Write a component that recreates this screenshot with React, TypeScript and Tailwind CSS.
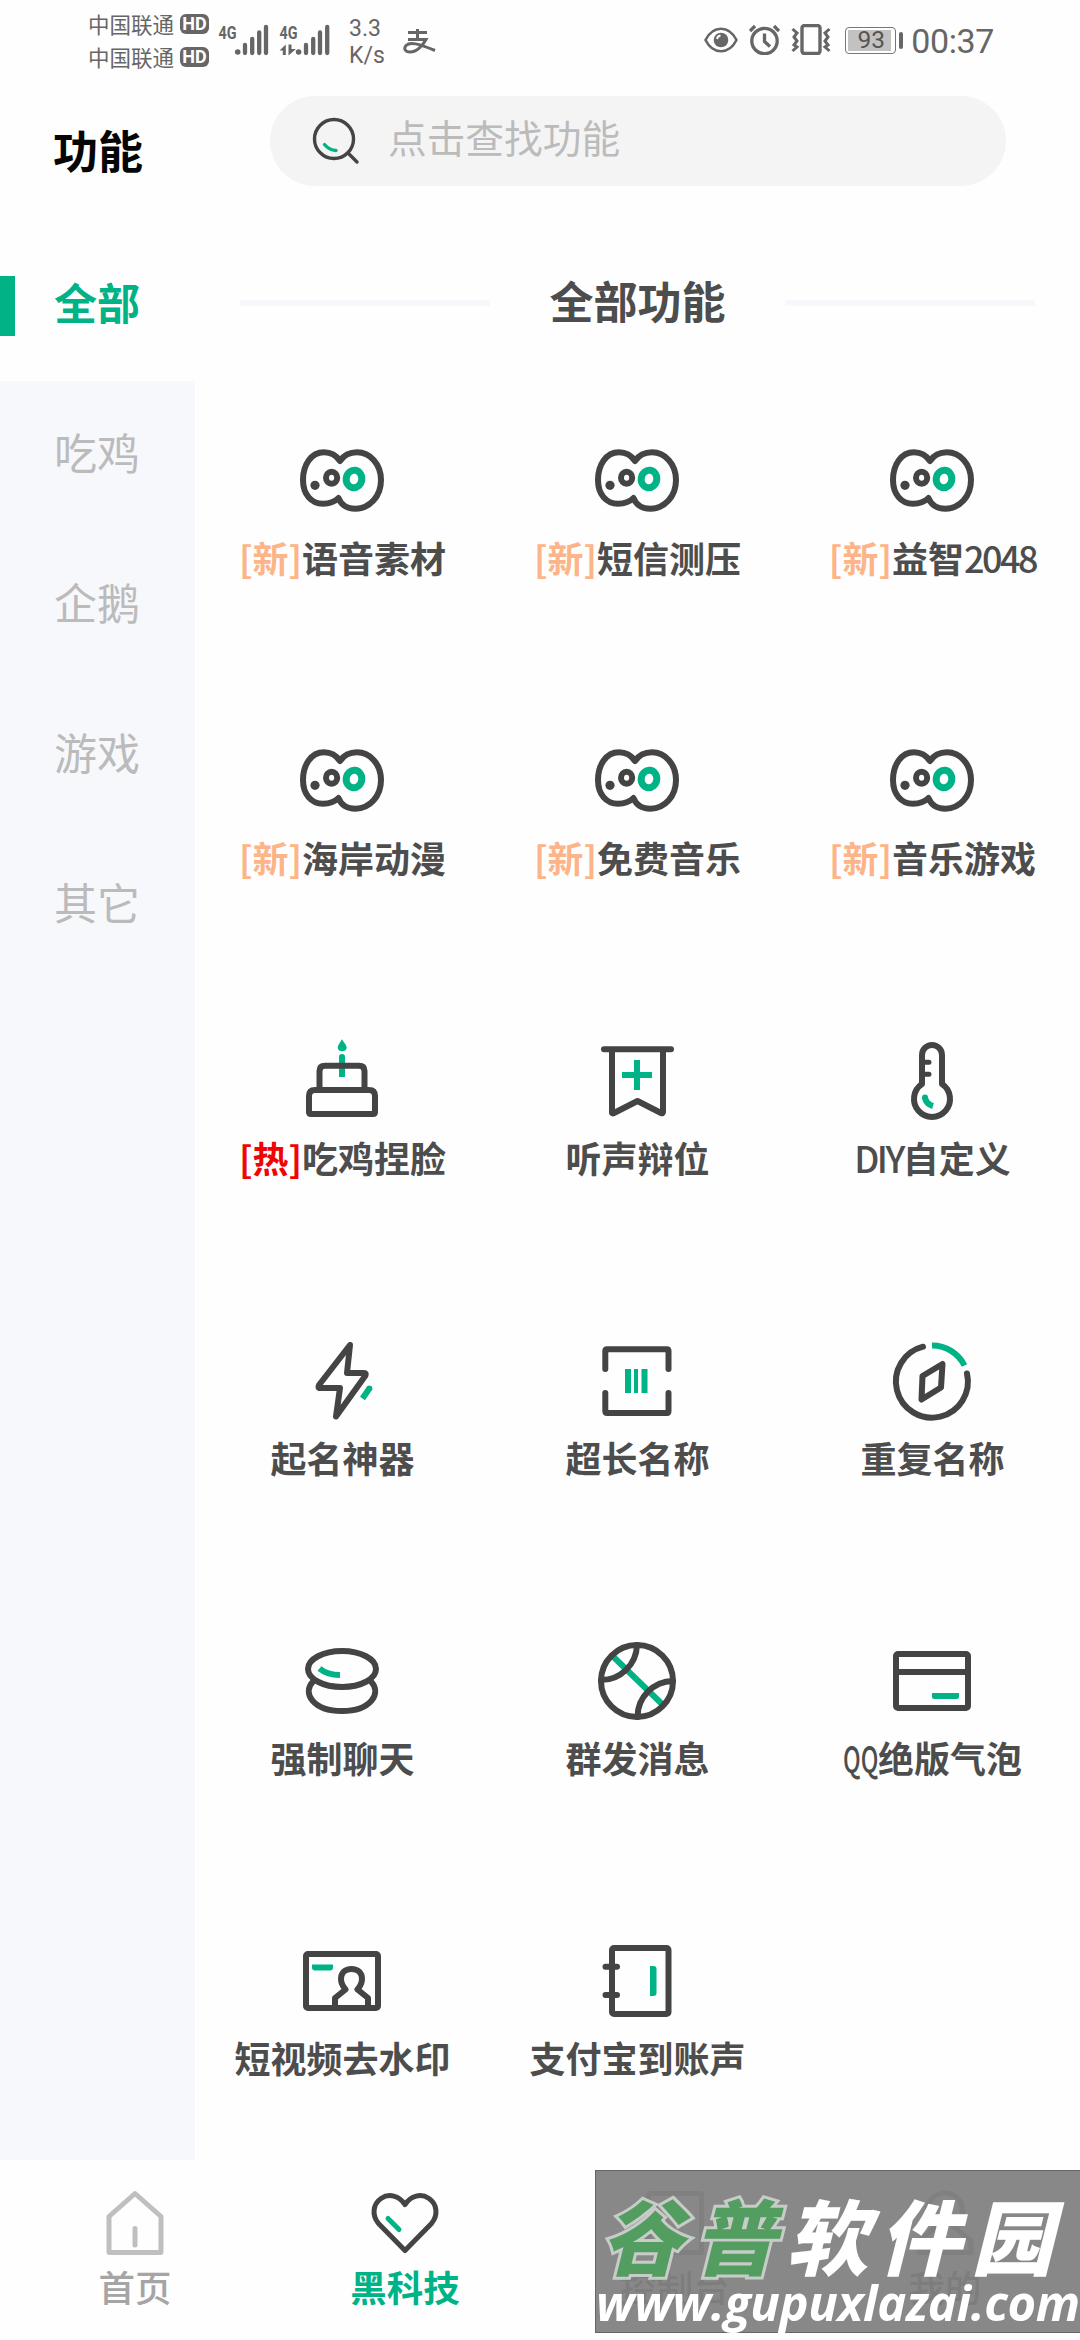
import React from 'react';

const DARK = '#444444';
const GREEN = '#00b386';

interface Tool {
  icon: React.ReactNode;
  label: string;
  latin?: string;
  latinFirst?: boolean;
  tag?: '新' | '热';
}

function IconBox({ children }: { children: React.ReactNode }) {
  return (
    <svg
      className="h-[90px] w-[91px]"
      viewBox="0 0 91 90"
      fill="none"
      stroke={DARK}
      strokeWidth="6"
      strokeLinecap="round"
      strokeLinejoin="round"
    >
      {children}
    </svg>
  );
}

const EyesIcon = () => (
  <IconBox>
    <path d="M43 25C39 19 33 16.3 27 16.3C14 16.3 6 29 6 44C6 58 14 67.7 26 67.7C32 67.7 38 65.5 41.5 62C44 68.5 50 72.7 58.5 72.7C73 72.7 84 60 84 44C84 28 73 16.3 60 16.3C53 16.3 47 19 43 25Z" />
    <circle cx="18" cy="49.3" r="4.6" fill={DARK} stroke="none" />
    <ellipse cx="34.6" cy="41.8" rx="5.6" ry="6" />
    <ellipse cx="57" cy="43" rx="7.8" ry="8.8" stroke={GREEN} strokeWidth="7" transform="rotate(8 57 43)" />
  </IconBox>
);

const CakeIcon = () => (
  <IconBox>
    <path d="M45 3.3C47 7 49.7 9 49.7 12A4.6 4.2 0 0 1 40.7 12C40.7 9 43 7 45 3.3Z" fill={GREEN} stroke="none" />
    <path d="M42 41V20.5Q42 18 45 18T48 20.5V41Z" fill={GREEN} stroke="none" />
    <path d="M22.5 54V35Q22.5 29.7 28 29.7H62Q67.5 29.7 67.5 35V54" />
    <path d="M12 76V60Q12 54 18 54H72Q78 54 78 60V76Q78 78 76 78H14Q12 78 12 76Z" />
  </IconBox>
);

const BannerIcon = () => (
  <IconBox>
    <path d="M12 13.3H79M20 13.3V77Q20.5 78 22 77L45.5 65L69 77Q71 78 71 76V13.3" />
    <path d="M30 39H60M45 24V54" stroke={GREEN} strokeLinecap="butt" />
  </IconBox>
);

const ThermometerIcon = () => (
  <IconBox>
    <path d="M35 48V19A10 10 0 0 1 55 19V48A18 18 0 1 1 35 48Z" />
    <path d="M36 26.3H42M36 38.3H42" strokeWidth="5" />
    <path d="M38 61.5Q39 68 46 70" stroke={GREEN} strokeLinecap="butt" />
    <circle cx="38" cy="61.5" r="3" fill={GREEN} stroke="none" />
  </IconBox>
);

const BoltIcon = () => (
  <IconBox>
    <path d="M53 9L22 49Q20.5 52 23 52H43L39 80.5L68.5 39.5Q69.5 37 67 37H50Z" />
    <path d="M73 51.5L65.5 62.5" stroke={GREEN} strokeLinecap="butt" />
    <circle cx="72.5" cy="52.3" r="2.8" fill={GREEN} stroke="none" />
  </IconBox>
);

const ScanIcon = () => (
  <IconBox>
    <path d="M13.3 33V15Q13.3 13.3 15 13.3H75Q76.5 13.3 76.5 15V33M13.3 57V75Q13.3 77 15 77H75Q76.5 77 76.5 75V57" />
    <path d="M33 33H39V57H33ZM42 33H46V57H42ZM49.5 33H55.5V57H49.5Z" fill={GREEN} stroke="none" />
  </IconBox>
);

const CompassIcon = () => (
  <IconBox>
    <path d="M80 37.5A36 36 0 1 1 36 10.7" />
    <path d="M45 9.5A36 36 0 0 1 77.5 29.5" stroke={GREEN} strokeLinecap="butt" />
    <path d="M55.5 28L54 51.5L34.5 63.5L35.5 40Z" />
  </IconBox>
);

const StonesIcon = () => (
  <IconBox>
    <ellipse cx="45" cy="33" rx="34" ry="18" />
    <path d="M16 45.5C5 57 16 75 45 75C74 75 85 57 74 45.5" />
    <path d="M22.5 32.5Q30 39 43 39" stroke={GREEN} strokeLinecap="butt" />
  </IconBox>
);

const BallIcon = () => (
  <IconBox>
    <path d="M20 19.5L71 69" stroke={GREEN} strokeLinecap="butt" />
    <path d="M45 9A36 36 0 0 1 9 44M81 45A36 36 0 0 0 45.5 81" />
    <circle cx="45" cy="45" r="36" />
  </IconBox>
);

const CardIcon = () => (
  <IconBox>
    <rect x="9" y="18" width="72" height="54" rx="2" />
    <path d="M9 36H81" />
    <path d="M45 57H72V60.5Q72 63 69.5 63H47.5Q45 63 45 60.5Z" fill={GREEN} stroke="none" />
  </IconBox>
);

const PortraitIcon = () => (
  <IconBox>
    <rect x="9" y="18" width="72" height="54" rx="2" />
    <path d="M38 72V62L48.5 53.5C45.5 50 44 46.5 44 43C44 37 48 33 54.5 33C61 33 65 37 65 43C65 46.5 63.5 50 60.5 53.5L71 62V72" />
    <path d="M15 28.5H36V31.5Q36 34.5 33 34.5H18Q15 34.5 15 31.5Z" fill={GREEN} stroke="none" />
  </IconBox>
);

const NotebookIcon = () => (
  <IconBox>
    <rect x="20" y="12" width="56.5" height="66" rx="2" />
    <path d="M13.5 30.7H25M13.5 59H25" />
    <path d="M58 30H61.5Q64.5 30 64.5 33V57Q64.5 60 61.5 60H58Z" fill={GREEN} stroke="none" />
  </IconBox>
);

const tools: Tool[] = [
  { icon: <EyesIcon />, label: '语音素材', tag: '新' },
  { icon: <EyesIcon />, label: '短信测压', tag: '新' },
  { icon: <EyesIcon />, label: '益智', latin: '2048', tag: '新' },
  { icon: <EyesIcon />, label: '海岸动漫', tag: '新' },
  { icon: <EyesIcon />, label: '免费音乐', tag: '新' },
  { icon: <EyesIcon />, label: '音乐游戏', tag: '新' },
  { icon: <CakeIcon />, label: '吃鸡捏脸', tag: '热' },
  { icon: <BannerIcon />, label: '听声辩位' },
  { icon: <ThermometerIcon />, label: '自定义', latin: 'DIY', latinFirst: true },
  { icon: <BoltIcon />, label: '起名神器' },
  { icon: <ScanIcon />, label: '超长名称' },
  { icon: <CompassIcon />, label: '重复名称' },
  { icon: <StonesIcon />, label: '强制聊天' },
  { icon: <BallIcon />, label: '群发消息' },
  { icon: <CardIcon />, label: '绝版气泡', latin: 'QQ', latinFirst: true },
  { icon: <PortraitIcon />, label: '短视频去水印' },
  { icon: <NotebookIcon />, label: '支付宝到账声' },
];

const categories = ['全部', '吃鸡', '企鹅', '游戏', '其它'];

function Carrier() {
  return (
    <div className="flex h-[33px] items-center gap-[6px]">
      <span className="text-[21.5px] leading-none">中国联通</span>
      <span className="flex h-5 w-[29px] items-center justify-center rounded-[6px] bg-[#666666] font-['Roboto'] text-[18px] leading-none font-bold text-white">
        HD
      </span>
    </div>
  );
}

function Signals() {
  return (
    <svg className="ml-2 h-[40px] w-[114px]" viewBox="218 20 114 40" fill="none" stroke="#666666" strokeWidth="4.3" strokeLinecap="round">
      <g fill="#666666" stroke="none" fontFamily="Roboto, sans-serif" fontSize="19" fontWeight="700">
        <text x="219.5" y="38.5" textLength="18" lengthAdjust="spacingAndGlyphs">4G</text>
        <text x="280.5" y="38.5" textLength="18" lengthAdjust="spacingAndGlyphs">4G</text>
        <circle cx="238.7" cy="52" r="2.8" />
        <circle cx="299.6" cy="52" r="2.8" />
        <path d="M280.5 50.5L286.8 44.5V55H283.8V50.5ZM289.500 44.5H292.500V49H297L289.500 55.5Z" />
      </g>
      <path d="M246 45V53M253.2 39V53M260.2 32.5V53M267 27V53" />
      <path d="M307 45V53M314.2 39V53M321 32.5V53M328.2 27V53" />
    </svg>
  );
}

function StatusBar() {
  return (
    <div className="flex h-[81px] items-start justify-between pr-[86px] pl-[88px] text-[#666666]">
      <div className="flex items-start">
        <div className="pt-[7px]">
          <Carrier />
          <Carrier />
        </div>
        <div className="pt-5">
          <Signals />
        </div>
        <div className="ml-[18px] pt-[15px] font-['Roboto'] text-[23px] leading-[27px]">
          <div>3.3</div>
          <div>K/s</div>
        </div>
        <svg className="mt-[28px] ml-[18px] h-[27px] w-[33px]" viewBox="0 0 33 27" fill="none" stroke="#666666" strokeWidth="3">
          <path d="M5 4.5H24M14.5 1V11M5 11.5H23C20 17 14 24 7 24C2 24 0.5 20.5 3 17.5C7 13.5 15 15.5 32 22.5" />
        </svg>
      </div>

      <div className="flex h-[55px] items-end">
        <svg className="mb-[2px] h-[26px] w-[34px]" viewBox="0 0 34 26" fill="none" stroke="#666666" strokeWidth="2.6">
          <path d="M1.5 13C9 -2 25 -2 32.5 13C25 28 9 28 1.5 13Z" />
          <circle cx="17" cy="13" r="7.3" fill="#666666" stroke="none" />
          <path d="M13 12Q13.5 9 16.5 8.5" stroke="#fefefe" strokeWidth="1.8" />
        </svg>
        <svg className="ml-[11px] h-[31px] w-[31px]" viewBox="0 0 31 31" fill="none" stroke="#666666" strokeWidth="3.3">
          <circle cx="15.5" cy="17" r="12.7" />
          <path d="M15.5 9.5V17.5L21 22.5M1 7L6 2M30 7L25 2" />
        </svg>
        <svg className="ml-[11px] h-[31px] w-[40px]" viewBox="0 0 40 31" fill="none" stroke="#666666" strokeWidth="3.4">
          <rect x="11" y="1.5" width="18" height="28" rx="2.5" />
          <path d="M1.5 5L6 9L3 13L6 17L3 21L6 23L1.5 27M38.5 5L34 9L37 13L34 17L37 21L34 23L38.5 27" strokeWidth="3" />
        </svg>
        <div className="mb-[1px] ml-[14px] flex h-[27px] w-[51px] rounded-[4px] border border-[#777777] p-[2px]">
          <div className="flex w-[43px] items-center justify-center bg-[#c2c2c2] pl-[3px] font-['Roboto'] text-[24.5px] leading-none text-[#555555]">93</div>
        </div>
        <div className="mb-[6px] ml-[3px] h-[17px] w-1 rounded-sm bg-[#666666]" />
        <span className="ml-[8px] font-['Roboto'] text-[34px] leading-[28px] tracking-[-0.4px]">00:37</span>
      </div>
    </div>
  );
}

function Header() {
  return (
    <header className="flex h-[155px] items-start pt-[15px] pl-[53px]">
      <h1 className="w-[217px] pt-[31px] text-[45px] leading-[45px] font-bold text-[#060606]">功能</h1>
      <div className="flex h-[90px] w-[736px] items-center rounded-full bg-[#f4f4f4] pl-[42px]">
        <svg className="h-12 w-12" viewBox="0 0 48 48" fill="none" stroke={DARK} strokeWidth="3.4" strokeLinecap="round">
          <circle cx="22" cy="22" r="19.5" />
          <path d="M36 36L45 45" />
          <path d="M12.5 27.5Q17 33 24 33.5" stroke={GREEN} />
        </svg>
        <span className="mb-[9px] ml-[28px] text-[38.7px] leading-none text-[#bbbbbb]">点击查找功能</span>
      </div>
    </header>
  );
}

function Sidebar() {
  return (
    <aside className="flex w-[195px] flex-col bg-[#f7f8fb]">
      {categories.map((name, index) => (
        <div
          key={name}
          className={`flex items-center ${
            index === 0 ? 'h-[145px] bg-[#fefefe] pb-[5px] font-bold text-[#00b386]' : 'h-[150px] text-[#bbbbbb]'
          }`}
        >
          <div className={`h-[60px] w-[15px] ${index === 0 ? 'bg-[#00b386]' : ''}`} />
          <span className="mb-[9px] ml-[39px] text-[43px] leading-none">{name}</span>
        </div>
      ))}
    </aside>
  );
}

function ToolLabel({ tool }: { tool: Tool }) {
  const latin = tool.latin && (
    <span
      className={
        tool.latin === 'QQ' ? 'inline-block w-[35px] origin-left scale-x-[0.65] font-medium' : 'font-medium tracking-[-0.07em]'
      }
    >
      {tool.latin}
    </span>
  );
  return (
    <span className="text-[36px] leading-[44px] font-semibold whitespace-nowrap text-[#4d4d4d]">
      {tool.tag && <span className={tool.tag === '新' ? 'text-[#fdb488]' : 'text-[#f00505]'}>[{tool.tag}]</span>}
      {tool.latinFirst && latin}
      {tool.label}
      {!tool.latinFirst && latin}
    </span>
  );
}

function NavItem({ label, active, children }: { label: string; active?: boolean; children: React.ReactNode }) {
  return (
    <div className="flex w-[270px] flex-col items-center pt-[25px]">
      <svg
        className="h-[76px] w-[76px]"
        viewBox="0 0 76 76"
        fill="none"
        stroke={active ? DARK : '#bfbfbf'}
        strokeWidth="5"
        strokeLinecap="round"
        strokeLinejoin="round"
      >
        {children}
      </svg>
      <span className={`mt-[6px] text-[36.5px] leading-[40px] ${active ? 'font-bold text-[#00b386]' : 'font-medium text-[#a5a5a5]'}`}>
        {label}
      </span>
    </div>
  );
}

function Watermark() {
  return (
    <div className="absolute right-0 bottom-[7px] h-[163px] w-[485px] border border-r-0 border-[#666666] bg-[#777777]/[0.875] whitespace-nowrap">
      <div className="mt-[22px] ml-[5px] flex text-[82px] leading-[82px] font-black tracking-[10.5px] italic">
        <span className="text-[#539d61] [-webkit-text-stroke:6px_#c8ccc8] [paint-order:stroke_fill]">谷普</span>
        <span className="text-white">软件园</span>
      </div>
      <div className="mt-[-4px] font-['Open_Sans'] text-[49px] leading-[62px] font-bold tracking-[-0.4px] text-white italic">
        www.gupuxlazai.com
      </div>
    </div>
  );
}

export default function App() {
  return (
    <div className="relative flex h-[2340px] w-[1080px] flex-col overflow-hidden bg-[#fefefe] font-['Noto_Sans_CJK_SC',sans-serif]">
      <StatusBar />
      <Header />

      <div className="flex h-[1924px]">
        <Sidebar />
        <main className="w-[885px]">
          <div className="flex h-[130px] items-center justify-between pr-[45px] pl-[45px] pt-[4px]">
            <div className="h-[6px] w-[250px] bg-[#f7f8fb]" />
            <h2 className="mb-[7px] text-[44px] leading-none font-semibold text-[#4d4d4d]">全部功能</h2>
            <div className="h-[6px] w-[250px] bg-[#f7f8fb]" />
          </div>
          <div className="grid grid-cols-3 pt-[70px]">
            {tools.map((tool) => (
              <div key={tool.label} className="flex h-[300px] flex-col items-center gap-[9px]">
                {tool.icon}
                <ToolLabel tool={tool} />
              </div>
            ))}
          </div>
        </main>
      </div>

      <nav className="flex h-[180px]">
        <NavItem label="首页">
          <path d="M38 8.5L64 31.5V67Q64 67.5 63.5 67.5H12.5Q12 67.5 12 67V31.5ZM38 43.5V60" />
        </NavItem>
        <NavItem label="黑科技" active>
          <path d="M38 65.5L11.5 38.5C4.5 30 6 19 14 13.5C22 8 32 10.5 38 19.5C44 10.5 54 8 62 13.5C70 19 71.5 30 64.5 38.5Z" />
          <path d="M21 33.5L32 44.5" stroke={GREEN} />
        </NavItem>
        <NavItem label="控制台">
          <rect x="11.5" y="8.5" width="53" height="59" rx="1" />
        </NavItem>
        <NavItem label="我的">
          <path d="M12 67.5V56L30 41C15 34 18 8 38 8C58 8 61 34 46 41L64 56V67.5Z" />
        </NavItem>
      </nav>

      <Watermark />
    </div>
  );
}
